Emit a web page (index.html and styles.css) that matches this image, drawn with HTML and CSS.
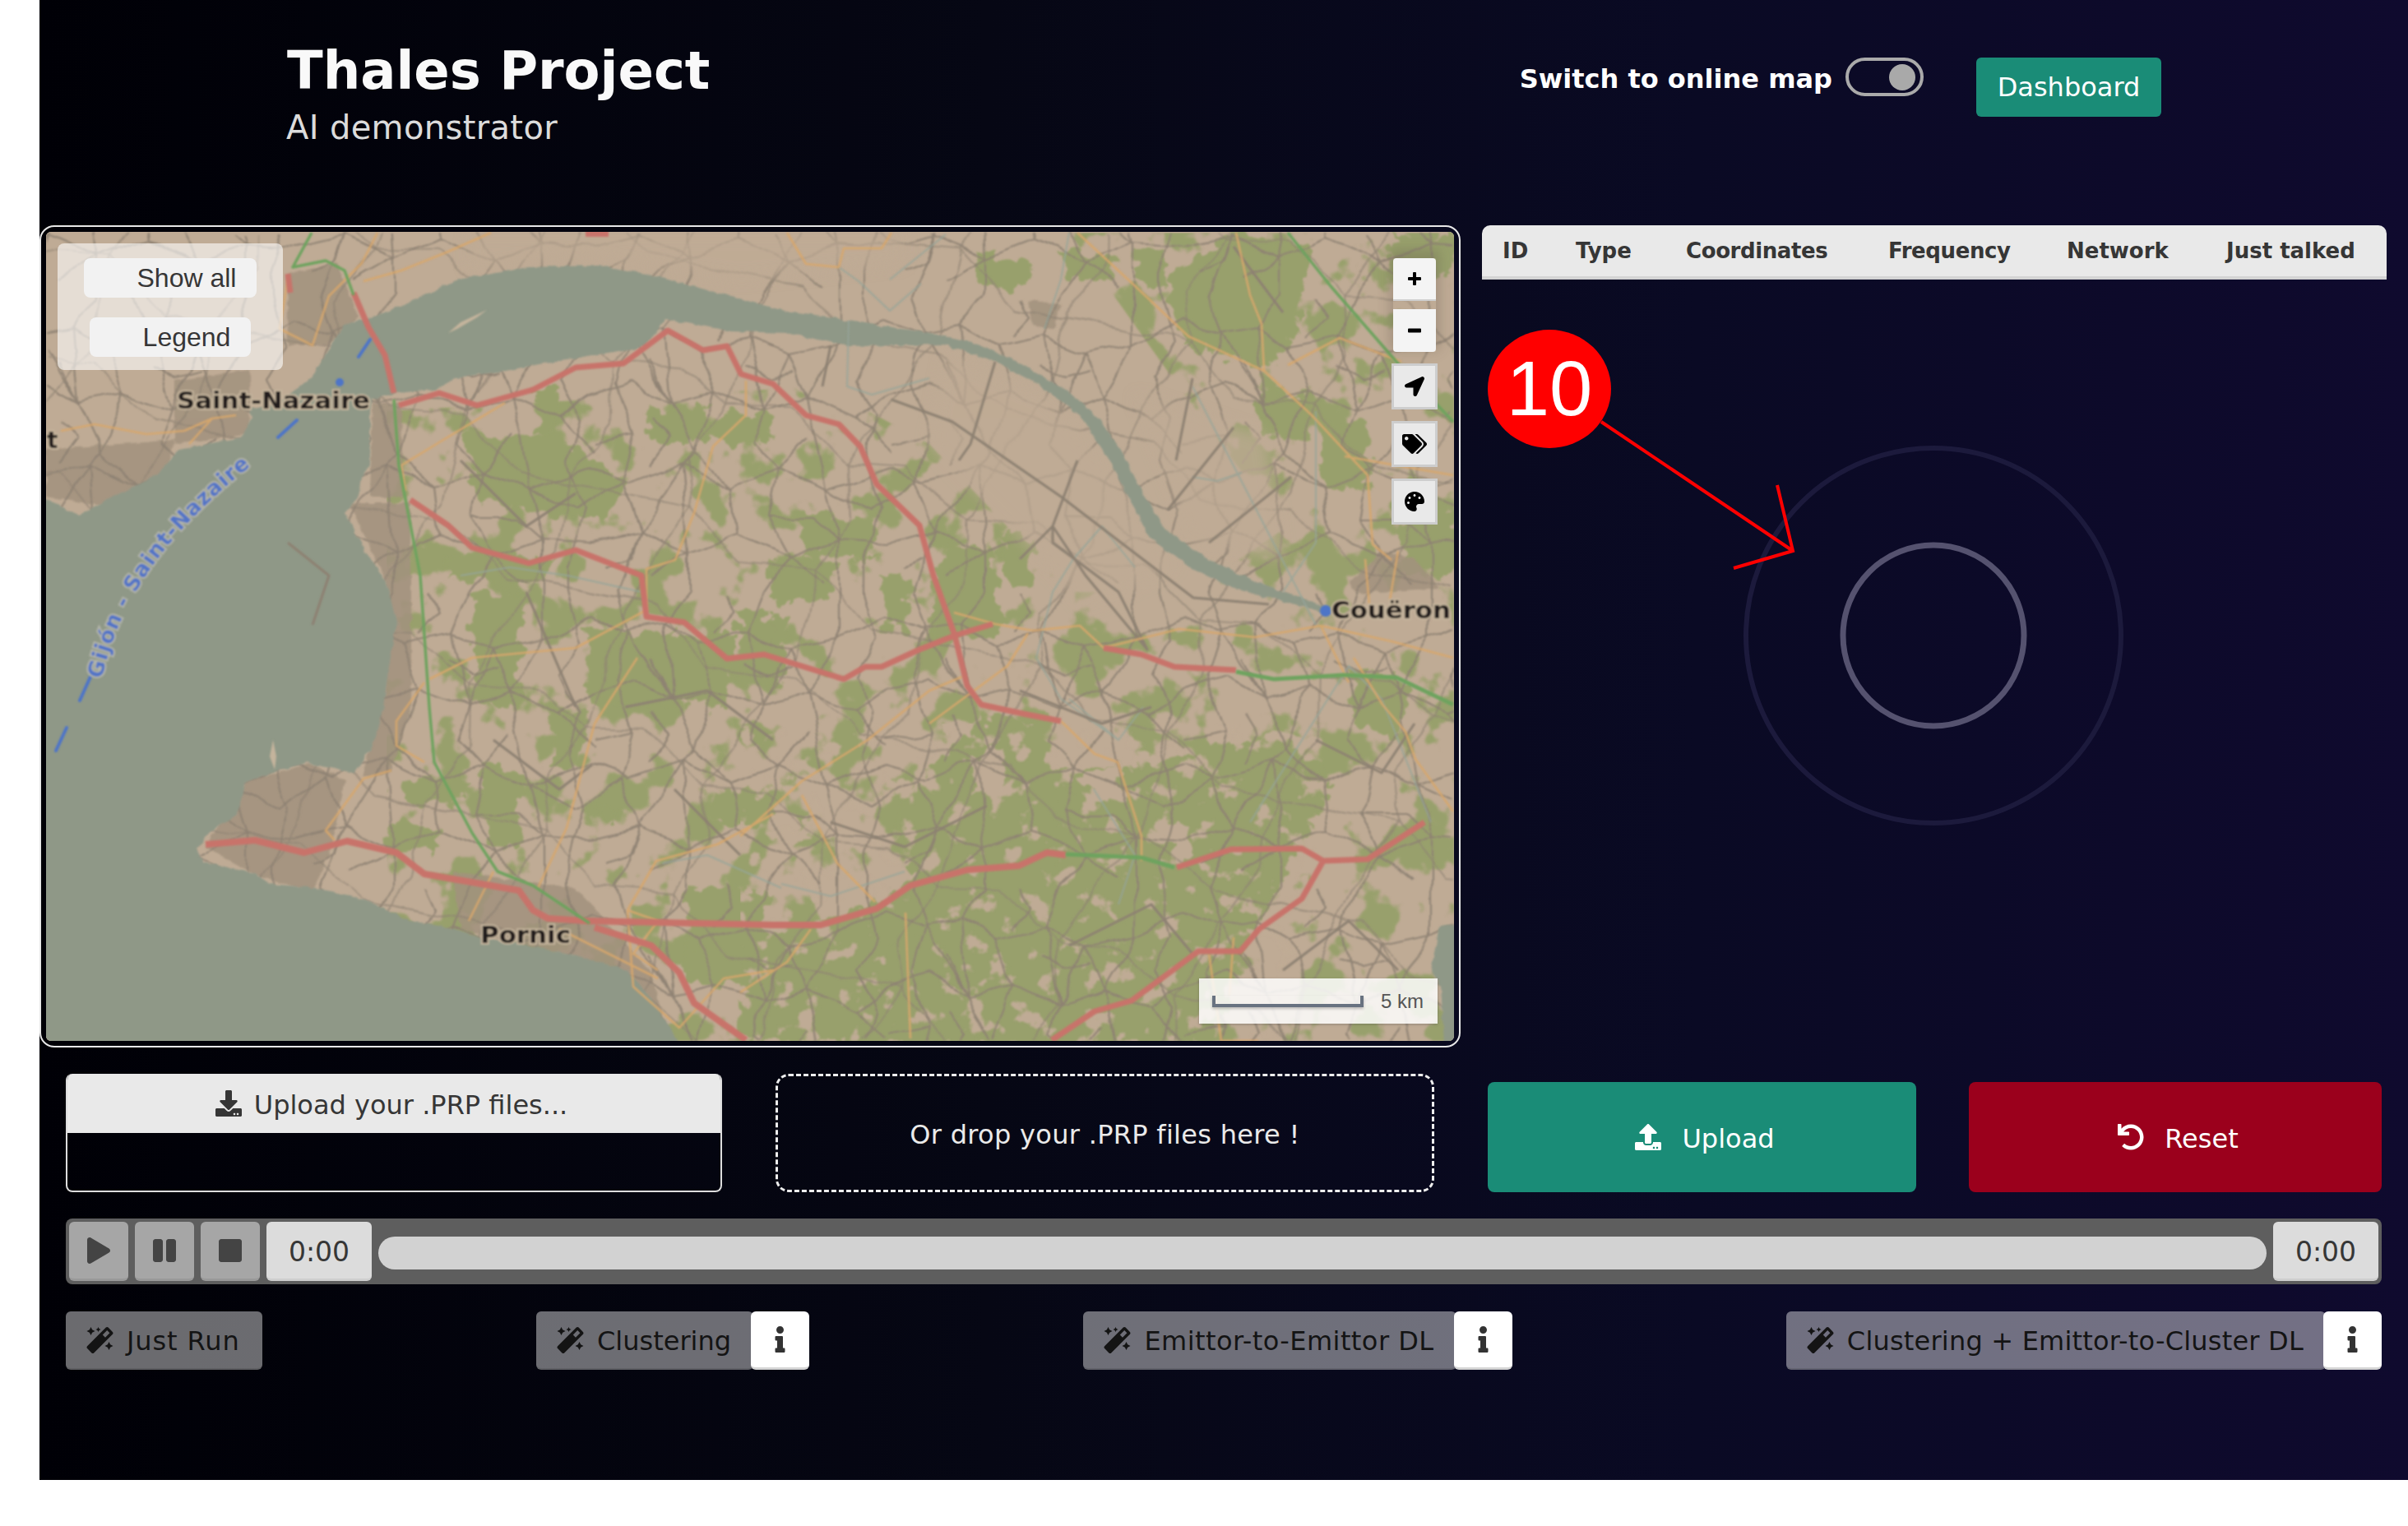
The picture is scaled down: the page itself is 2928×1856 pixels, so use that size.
FILE: index.html
```html
<!DOCTYPE html>
<html lang="en">
<head>
<meta charset="utf-8">
<title>Thales Project</title>
<link rel="stylesheet" href="styles.css">
</head>
<body>
<svg class="defs" width="0" height="0" aria-hidden="true">
  <defs>
    <symbol id="i-wand" viewBox="0 0 512 512"><path d="M224 96l16-32 32-16-32-16-16-32-16 32-32 16 32 16 16 32zM80 160l26.660-53.330L160 80l-53.340-26.670L80 0 53.330 53.330 0 80l53.330 26.670L80 160zm352 128l-26.660 53.330L352 368l53.340 26.670L432 448l26.660-53.330L512 368l-53.340-26.670L432 288zm70.620-193.770L417.770 9.380C411.530 3.120 403.340 0 395.150 0c-8.190 0-16.380 3.120-22.630 9.380L9.380 372.520c-12.500 12.500-12.500 32.760 0 45.250l84.850 84.850c6.250 6.250 14.440 9.370 22.620 9.370 8.190 0 16.380-3.120 22.630-9.370l363.140-363.150c12.500-12.480 12.500-32.750 0-45.240zM359.450 203.460l-50.910-50.910 86.600-86.600 50.910 50.910-86.600 86.600z"/></symbol>
    <symbol id="i-info" viewBox="0 0 192 512"><path d="M20 424.229h20V279.771H20c-11.046 0-20-8.954-20-20V212c0-11.046 8.954-20 20-20h112c11.046 0 20 8.954 20 20v212.229h20c11.046 0 20 8.954 20 20V492c0 11.046-8.954 20-20 20H20c-11.046 0-20-8.954-20-20v-47.771c0-11.046 8.954-20 20-20zM96 0C56.235 0 24 32.235 24 72s32.235 72 72 72 72-32.235 72-72S135.764 0 96 0z"/></symbol>
    <pattern id="roads-a" width="360" height="360" patternUnits="userSpaceOnUse">
      <g class="tile">
        <path d="M0 30L40 46 88 38 130 62 190 50 240 70 300 58 360 30"/>
        <path d="M0 120L50 104 96 130 150 118 210 140 262 122 320 148 360 120"/>
        <path d="M0 210L44 226 110 204 168 232 226 212 284 236 360 210"/>
        <path d="M0 300L60 286 118 312 176 290 240 318 300 296 360 300"/>
        <path d="M30 0L44 46 28 104 52 170 36 226 58 286 30 360"/>
        <path d="M118 0L88 38 96 130 124 190 110 204 118 312 118 360"/>
        <path d="M210 0L190 50 210 140 196 180 226 212 214 270 240 318 210 360"/>
        <path d="M300 0L300 58 262 122 284 236 300 296 300 360"/>
        <path d="M44 46L96 130M150 118L124 190 168 232M240 70L210 140M320 148L360 190M52 170L0 180M176 290L168 232M58 286L110 204M262 122L240 70M284 236L340 262 360 250M96 130L70 80M226 212L262 170M130 62L150 118M36 226L0 250M214 270L270 270 300 296M118 312L70 340M240 318L280 350"/>
        <path d="M330 0L346 60 322 100 344 148 330 200 350 262 330 330 330 360M160 0L172 26 150 50M76 150L92 176 70 206M186 84L216 100 246 92M20 330L48 318 58 286"/>
      </g>
    </pattern>
    <pattern id="roads-b" width="470" height="430" patternUnits="userSpaceOnUse" patternTransform="rotate(24)">
      <g class="tile tile-thin">
        <path d="M0 70L70 90 140 60 230 96 300 70 390 100 470 70"/>
        <path d="M0 240L80 220 160 262 250 230 340 270 470 240"/>
        <path d="M60 0L70 90 50 170 80 220 60 320 60 430"/>
        <path d="M250 0L230 96 262 160 250 230 270 340 250 430"/>
        <path d="M400 0L390 100 420 170 400 250 420 340 400 430"/>
        <path d="M0 370L90 350 170 390 280 360 380 390 470 370"/>
      </g>
    </pattern>
    <filter id="patches" x="0" y="0" width="100%" height="100%" color-interpolation-filters="sRGB">
      <feTurbulence type="fractalNoise" baseFrequency="0.017" numOctaves="4" seed="21" result="n"/>
      <feColorMatrix in="n" type="matrix" values="0 0 0 0 .596  0 0 0 0 .627  0 0 0 0 .424  1 0 0 0 0"/>
      <feComponentTransfer><feFuncA type="linear" slope="16" intercept="-8.7"/></feComponentTransfer>
      <feComposite in2="SourceGraphic" operator="in"/>
      <feGaussianBlur stdDeviation="0.9"/>
    </filter>
    <filter id="holes" x="0" y="0" width="100%" height="100%" color-interpolation-filters="sRGB">
      <feTurbulence type="fractalNoise" baseFrequency="0.035" numOctaves="4" seed="5" result="n"/>
      <feColorMatrix in="n" type="matrix" values="0 0 0 0 .749  0 0 0 0 .671  0 0 0 0 .584  1 0 0 0 0"/>
      <feComponentTransfer><feFuncA type="linear" slope="12" intercept="-7.2"/></feComponentTransfer>
      <feComposite in2="SourceGraphic" operator="in"/>
      <feGaussianBlur stdDeviation="1"/>
    </filter>
    <filter id="rough" x="-5%" y="-5%" width="110%" height="110%">
      <feTurbulence type="fractalNoise" baseFrequency="0.05" numOctaves="3" seed="7"/>
      <feDisplacementMap in="SourceGraphic" scale="34" xChannelSelector="R" yChannelSelector="G"/>
      <feGaussianBlur stdDeviation="0.9"/>
    </filter>
    <filter id="wobble" x="0" y="0" width="100%" height="100%">
      <feTurbulence type="fractalNoise" baseFrequency="0.02" numOctaves="2" seed="3"/>
      <feDisplacementMap in="SourceGraphic" scale="18" xChannelSelector="R" yChannelSelector="G"/>
      <feGaussianBlur stdDeviation="0.85"/>
    </filter>
    <filter id="coast" x="-2%" y="-2%" width="104%" height="104%">
      <feTurbulence type="fractalNoise" baseFrequency="0.09" numOctaves="2" seed="11"/>
      <feDisplacementMap in="SourceGraphic" scale="6" xChannelSelector="R" yChannelSelector="G"/>
      <feGaussianBlur stdDeviation="0.8"/>
    </filter>
    <filter id="soft"><feGaussianBlur stdDeviation="0.8"/></filter>
    <filter id="softer"><feGaussianBlur stdDeviation="9"/></filter>
  </defs>
</svg>

<div class="app">
  <header class="topbar">
    <div class="brand">
      <h1 class="brand-title">Thales Project</h1>
      <p class="brand-sub">AI demonstrator</p>
    </div>
    <div class="top-actions">
      <span class="switch-label">Switch to online map</span>
      <span class="toggle"><span class="toggle-knob"></span></span>
      <button class="btn-dashboard">Dashboard</button>
    </div>
  </header>

  <section class="workspace">
    <div class="map-card">
      <div class="map">
        <svg class="map-art" viewBox="56 282 1712 984" preserveAspectRatio="none" aria-hidden="true">
          <rect class="m-land" x="56" y="282" width="1712" height="984"/>
          <path class="m-forest-noise" filter="url(#patches)" d="M470 500L1000 470 1130 540 1300 720 1450 720 1768 500 1768 1266 470 1266ZM1300 283L1768 283 1768 500 1560 640 1440 480Z"/>
          <g filter="url(#rough)" class="m-forest">
            <path d="M1124 943L1198 877 1267 873 1273 933 1313 933 1399 933 1480 905 1589 913 1618 960 1589 1013 1577 1040 1531 1117 1508 1167 1474 1270 917 1270 911 1133 1015 1117 1112 1067 1089 987Z"/>
            <path d="M1187 310L1256 316 1250 350 1195 352ZM1290 306L1360 312 1352 340 1296 342ZM1417 340L1500 283 1590 300 1580 400 1540 450 1440 420ZM1526 474L1595 480 1590 535 1535 530ZM1606 509L1669 520 1660 597 1615 590Z"/>
            <path d="M1158 662L1204 668 1221 776 1130 770 1136 705ZM1219 650L1256 654 1252 711 1224 708ZM900 750L957 756 950 834 900 830ZM969 623L1066 628 1060 681 975 676ZM934 681L1015 686 1010 734 940 730Z"/>
            <path d="M568 524L680 530 763 590 740 627 620 620 575 600ZM650 470L680 474 676 530 654 526ZM539 673L671 680 665 708 545 706ZM786 497L940 505 932 539 790 536ZM574 719L637 724 632 860 580 855ZM712 765L890 772 884 860 718 855ZM895 742L940 748 935 796 900 790Z"/>
            <path d="M666 867L712 870 708 930 672 928ZM488 943L568 948 562 977 494 975ZM465 1000L534 1005 528 1033 470 1030ZM585 933L637 940 630 1033 590 1030ZM861 960L940 966 934 1007 868 1002ZM832 1077L935 1082 930 1200 838 1195ZM895 1217L940 1222 936 1263 900 1260ZM717 980L757 984 752 1000 722 998Z"/>
            <path d="M1690 285L1768 285 1768 330 1700 350ZM1700 640L1768 620 1768 700 1710 695ZM1640 810L1720 830 1700 900 1650 880ZM1380 300L1420 310 1412 350 1386 346ZM1070 700L1110 705 1100 770 1076 765Z"/>
          </g>
          <path class="m-forest-noise" filter="url(#holes)" d="M900 880L1500 880 1620 900 1560 1266 900 1266Z"/>
          <g filter="url(#rough)" class="m-land">
            <path d="M1313 940L1359 930 1365 970 1330 975ZM1180 920L1226 906 1220 960 1186 965ZM1420 1000L1450 1006 1440 1050 1422 1040Z"/>
          </g>
          <g class="m-urban" filter="url(#coast)">
            <path d="M350 333L410 320 436 386 400 420 350 420ZM212 463L304 450 304 528 212 540ZM56 547L212 535 200 590 130 616 56 604ZM453 490L488 490 490 604 450 604ZM425 612L499 612 499 700 470 708ZM470 700L500 700 500 860 475 940 440 945 462 860Z"/>
            <path d="M250 1030L300 950 378 928 420 950 400 1040 380 1085 310 1065ZM550 1060L700 1080 790 1180 815 1266 780 1266 700 1165 640 1150 560 1130Z"/>
            <path d="M1640 710L1680 670 1720 680 1750 715 1650 722ZM1250 365L1290 370 1280 400 1255 396Z"/>
          </g>
          <rect class="m-tile" x="56" y="282" width="1712" height="984" fill="url(#roads-a)" filter="url(#wobble)"/>
          <rect class="m-tile-b" x="56" y="282" width="1712" height="984" fill="url(#roads-b)" filter="url(#wobble)"/>
          <path class="m-fade" filter="url(#softer)" d="M570 283L1100 283 1100 320 900 340 700 310 570 330ZM1150 430L1270 480 1360 580 1430 690 1320 740 1230 640 1130 540ZM1380 480L1540 530 1560 680 1450 660Z"/>
          <path class="m-water" filter="url(#coast)" d="M379 459L419 394 453 386 499 367 557 340 643 325 729 323 786 333 872 356 957 379 1032 390 1130 405 1187 417 1244 444 1302 478 1336 509 1365 551 1388 597 1417 643 1463 677 1520 704 1612 738 1606 744 1497 715 1445 689 1399 654 1371 604 1348 558 1313 505 1267 470 1210 440 1147 419 1032 421 957 405 890 403 809 388 786 421 746 428 671 440 614 451 557 459 528 474 482 478 453 486 450 497 450 566 439 581 436 604 419 624 442 666 470 708 482 757 473 810 465 867 453 907 430 940 373 928 338 937 298 953 287 993 258 1010 238 1033 247 1048 310 1063 327 1075 384 1080 442 1093 499 1120 545 1128 585 1140 643 1150 700 1163 763 1180 786 1207 815 1250 826 1270 50 1270 50 604 97 627 138 604 189 578 218 547 293 532 307 509 304 497 338 490Z"/>
          <path class="m-water" filter="url(#coast)" d="M1750 1127L1770 1125 1770 1270 1756 1270 1752 1200 1740 1180Z"/>
          <path class="m-shoal" filter="url(#soft)" d="M545 405L560 392 592 377 580 386 556 400ZM334 936L328 920 332 900 336 920Z"/>
          <g class="m-river" filter="url(#soft)">
            <path d="M1032 390L1030 470 1060 480 1130 460M1120 345L1082 378 1044 342 1020 325M1150 285L1082 340M1270 400L1290 340 1300 283M1380 690L1340 640 1305 680 1280 720 1260 800 1290 850 1360 900M1450 580L1480 585 1510 575M1300 850L1360 900 1390 860M1600 500L1600 660 1560 720M1450 470L1600 760M1520 1000L1640 810 1680 850 1740 1000M1330 960L1380 1040 1360 1100"/>
            <path d="M560 700L620 690 690 700 780 720M805 1050L860 1040 950 1080M1100 1060L1010 1090 950 1075"/>
          </g>
          <g class="m-rail" filter="url(#soft)">
            <path d="M1084 486L1158 513 1290 604 1405 692 1451 727 1543 735"/>
            <path d="M1280 640L1320 700 1395 790 1360 720 1280 660ZM1010 420L1000 470M1210 440L1180 540 1166 560M1310 560L1280 640 1240 680M1430 560L1450 460M1420 620L1500 520M1470 660L1570 580"/>
            <path d="M350 660L400 700 380 760M560 560L640 640 700 600M640 720L700 860M760 860L860 840 940 900M600 900L680 960 720 930M820 960L900 1040M1010 1000L1100 1030 1200 980M1300 1150L1400 1100 1450 1160M1560 1180L1640 1120 1700 1180M1600 900L1680 940 1720 880M1500 300L1560 380M1240 840L1340 880 1400 860"/>
          </g>
          <g class="m-orange" filter="url(#soft)">
            <path d="M597 283L545 306 488 329 442 342M459 283L440 320 400 360 380 420 340 400 350 340"/>
            <path d="M74 524L115 516 178 528 224 524 258 509 287 505M258 509L230 540"/>
            <path d="M614 490L539 535 488 566 493 597"/>
            <path d="M907 463L907 505 867 543 844 624 821 681 786 692 786 742 700 788 574 800 522 826"/>
            <path d="M957 283L980 321 1020 325 1026 302 1072 302 1084 283"/>
            <path d="M1310 283L1376 344 1445 409 1537 451 1595 505 1663 578 1669 662 1692 681M1635 555L1767 578"/>
            <path d="M1503 283L1520 359 1534 394 1537 451M1566 444L1629 411 1704 440M1660 680L1665 735M1700 670L1690 730"/>
            <path d="M1210 759L1256 767 1313 761 1342 788 1434 765 1526 775 1606 761 1692 780 1767 800M1606 761L1640 830M1160 745L1210 759M1250 770L1225 810 1130 880"/>
            <path d="M1290 877L1331 917 1359 927 1388 1017 1388 1047"/>
            <path d="M1646 800L1681 857 1709 890 1721 923 1767 987"/>
            <path d="M775 800L723 880 689 1007 654 1080"/>
            <path d="M940 990L872 1027 798 1047 763 1107M763 1107L800 1120 770 1160 800 1180M763 1107L770 1200 826 1250 880 1190 940 1180"/>
            <path d="M975 950L1055 900 1130 840 1170 823M975 967L1018 1050 1064 1097M975 950L900 1017M1101 1110L1107 1263M986 1130L957 1170 900 1207"/>
            <path d="M516 830L482 877 482 907 516 927M476 937L442 947 396 1010 407 1022M600 1060L570 1120M680 1130L800 1190"/>
            <path d="M1470 1160L1485 1266 1530 1266M1495 1210L1500 1140"/>
          </g>
          <g class="m-red" filter="url(#soft)">
            <path d="M350 333L353 356M430 356L448 398 468 432 479 478"/>
            <path class="m-red-b" d="M712 284L740 284"/>
            <path d="M485 493L534 478 580 493 648 474 700 447 758 442 812 402 855 426 884 421 901 455 940 467 980 505 1020 516 1046 543 1066 589 1118 639 1135 700 1161 773 1176 834 1193 857 1244 868 1290 877"/>
            <path d="M1207 759L1161 773 1118 790 1072 811 1052 811 1026 826 929 796 884 801 832 757 786 750 780 700 700 669 643 685 574 666 545 639 499 608"/>
            <path d="M1342 788L1388 796 1428 811 1503 815"/>
            <path class="m-red-b" d="M250 1027L310 1022 370 1037 422 1023 482 1037 516 1063 631 1083 648 1107 666 1117 712 1120 940 1125 998 1125 1066 1105 1107 1077 1176 1058 1239 1053 1273 1037 1296 1040"/>
            <path d="M1431 1055L1497 1033 1583 1032 1609 1047 1663 1045 1732 1000M1609 1047L1583 1093 1531 1130 1508 1157 1457 1157 1376 1217 1331 1230 1279 1265"/>
            <path class="m-red-b" d="M723 1128L792 1150 826 1183 844 1220 907 1265"/>
          </g>
          <g class="m-green" filter="url(#soft)">
            <path d="M379 283L356 325 396 317 419 329 430 359M479 486L485 566 511 700 522 860 528 927 574 1013 605 1060 648 1077 717 1123"/>
            <path d="M1566 283L1618 348 1698 440 1767 513"/>
            <path class="m-green-b" d="M1503 817L1549 826 1635 821 1698 824 1767 857M1296 1039L1388 1043 1428 1055"/>
          </g>
          <g class="m-ferry" filter="url(#soft)">
            <path d="M68 913L81 885M97 852L110 823M338 532L361 511M436 434L450 413"/>
            <circle cx="413" cy="465" r="3"/>
            <circle cx="1612" cy="743" r="5"/>
          </g>
          <path id="ferry-path" class="m-none" d="M124 826C144 730 205 636 346 536"/>
          <text class="m-ferry-label" filter="url(#soft)"><textPath href="#ferry-path">Gijón - Saint-Nazaire</textPath></text>
          <g class="m-labels" filter="url(#soft)">
            <text x="215" y="497" textLength="235" lengthAdjust="spacingAndGlyphs">Saint-Nazaire</text>
            <text x="1619" y="752" textLength="145" lengthAdjust="spacingAndGlyphs">Couëron</text>
            <text x="584" y="1147" textLength="110" lengthAdjust="spacingAndGlyphs">Pornic</text>
            <text x="57" y="545">t</text>
          </g>
        </svg>

        <div class="layer-panel">
          <button class="layer-btn">Show all</button>
          <button class="layer-btn">Legend</button>
        </div>

        <div class="map-tools">
          <div class="zoom-group">
            <button class="zoom-btn"><svg class="zoom-icon" viewBox="0 0 16 16"><path d="M6 1a1 1 0 0 1 1-1h2a1 1 0 0 1 1 1v5h5a1 1 0 0 1 1 1v2a1 1 0 0 1-1 1h-5v5a1 1 0 0 1-1 1h-2a1 1 0 0 1-1-1v-5h-5a1 1 0 0 1-1-1v-2a1 1 0 0 1 1-1h5z"/></svg></button>
            <button class="zoom-btn"><svg class="zoom-icon" viewBox="0 0 16 16"><rect y="5.500" width="16" height="5" rx="1"/></svg></button>
          </div>
          <button class="tool-btn"><svg class="tool-icon" viewBox="0 0 512 512"><path d="M444.520 3.520L28.740 195.420c-47.970 22.390-31.980 92.750 19.190 92.750h175.910v175.910c0 51.170 70.360 67.170 92.750 19.190l191.900-415.780c15.990-38.390-25.590-79.970-63.970-63.970z"/></svg></button>
          <button class="tool-btn"><svg class="tool-icon tool-icon-wide" viewBox="0 0 640 512"><path d="M497.941 225.941L286.059 14.059A48 48 0 0 0 252.118 0H48C21.490 0 0 21.490 0 48v204.118a48 48 0 0 0 14.059 33.941l211.882 211.882c18.744 18.745 49.136 18.746 67.882 0l204.118-204.118c18.745-18.745 18.745-49.137 0-67.882zM112 160c-26.510 0-48-21.490-48-48s21.490-48 48-48 48 21.490 48 48-21.490 48-48 48zm513.941 133.823L421.823 497.941c-18.745 18.745-49.137 18.745-67.882 0l-.36-.36L527.640 323.522c16.999-16.999 26.360-39.600 26.360-63.640s-9.362-46.641-26.360-63.640L331.397 0h48.721a48 48 0 0 1 33.941 14.059l211.882 211.882c18.745 18.745 18.745 49.137 0 67.882z"/></svg></button>
          <button class="tool-btn"><svg class="tool-icon" viewBox="0 0 512 512"><path d="M204.300 5C104.900 24.400 24.800 104.300 5.200 203.400c-37 187 131.700 326.400 258.800 306.700 41.200-6.400 61.400-54.600 42.500-91.700-23.100-45.400 9.900-98.400 60.900-98.400h79.700c35.800 0 64.800-29.600 64.900-65.300C511.500 97.100 368.100-26.900 204.300 5zM96 320c-17.700 0-32-14.300-32-32s14.300-32 32-32 32 14.300 32 32-14.300 32-32 32zm32-128c-17.700 0-32-14.300-32-32s14.300-32 32-32 32 14.300 32 32-14.300 32-32 32zm128-64c-17.700 0-32-14.300-32-32s14.300-32 32-32 32 14.300 32 32-14.300 32-32 32zm128 64c-17.700 0-32-14.300-32-32s14.300-32 32-32 32 14.300 32 32-14.300 32-32 32z"/></svg></button>
        </div>

        <div class="scale-box">
          <span class="scale-bar"></span>
          <span class="scale-text">5 km</span>
        </div>
      </div>
    </div>

    <div class="side">
      <div class="emitter-head">
        <span>ID</span><span>Type</span><span class="head-tight">Coordinates</span><span class="head-tight">Frequency</span><span>Network</span><span>Just talked</span>
      </div>
      <svg class="radar" viewBox="0 0 470 470" aria-hidden="true">
        <circle class="radar-outer" cx="235" cy="235" r="228"/>
        <circle class="radar-inner" cx="235" cy="235" r="110"/>
      </svg>
    </div>
  </section>

  <section class="upload-row">
    <div class="file-box">
      <div class="file-cta">
        <svg class="icon-md" viewBox="0 0 512 512"><path d="M216 0h80c13.300 0 24 10.700 24 24v168h87.700c17.800 0 26.700 21.500 14.100 34.100L269.700 378.300c-7.500 7.500-19.800 7.500-27.300 0L90.100 226.100c-12.600-12.600-3.700-34.100 14.100-34.100H192V24c0-13.300 10.700-24 24-24zm296 376v112c0 13.300-10.700 24-24 24H24c-13.300 0-24-10.700-24-24V376c0-13.300 10.700-24 24-24h146.700l49 49c20.100 20.100 52.500 20.100 72.600 0l49-49H488c13.300 0 24 10.700 24 24zm-124 88c0-11-9-20-20-20s-20 9-20 20 9 20 20 20 20-9 20-20zm64 0c0-11-9-20-20-20s-20 9-20 20 9 20 20 20 20-9 20-20z"/></svg>
        <span class="lbl">Upload your .PRP files...</span>
      </div>
    </div>
    <div class="drop-box">Or drop your .PRP files here !</div>
    <button class="action action-upload">
      <svg class="icon-md" viewBox="0 0 512 512"><path d="M296 384h-80c-13.300 0-24-10.700-24-24V192h-87.700c-17.800 0-26.700-21.500-14.100-34.100L242.300 5.700c7.500-7.500 19.800-7.500 27.300 0l152.200 152.200c12.600 12.600 3.700 34.100-14.100 34.100H320v168c0 13.300-10.700 24-24 24zm216-8v112c0 13.300-10.700 24-24 24H24c-13.300 0-24-10.700-24-24V376c0-13.300 10.700-24 24-24h136v8c0 30.900 25.100 56 56 56h80c30.900 0 56-25.100 56-56v-8h136c13.300 0 24 10.700 24 24zm-124 88c0-11-9-20-20-20s-20 9-20 20 9 20 20 20 20-9 20-20zm64 0c0-11-9-20-20-20s-20 9-20 20 9 20 20 20 20-9 20-20z"/></svg>
      <span class="lbl">Upload</span>
    </button>
    <button class="action action-reset">
      <svg class="icon-md" viewBox="0 0 512 512"><path d="M212.333 224.333H12c-6.627 0-12-5.373-12-12V12C0 5.373 5.373 0 12 0h48c6.627 0 12 5.373 12 12v78.112C117.773 39.279 184.260 7.470 258.175 8.007c136.906.994 246.448 111.623 246.157 248.532C504.041 393.258 393.120 504 256.333 504c-64.089 0-122.496-24.313-166.510-64.215-5.099-4.622-5.334-12.554-.467-17.420l33.967-33.967c4.474-4.474 11.662-4.717 16.401-.525C170.760 415.336 211.580 432 256.333 432c97.268 0 176-78.716 176-176 0-97.267-78.716-176-176-176-58.496 0-110.280 28.476-142.274 72.333h98.274c6.627 0 12 5.373 12 12v48c0 6.627-5.373 12-12 12z"/></svg>
      <span class="lbl">Reset</span>
    </button>
  </section>

  <section class="player">
    <button class="p-btn"><svg class="p-icon" viewBox="0 0 448 512"><path d="M424.400 214.700L72.400 6.600C43.800-10.300 0 6.100 0 47.900V464c0 37.500 40.700 60.100 72.400 41.300l352-208c31.400-18.500 31.500-64.100 0-82.600z"/></svg></button>
    <button class="p-btn"><svg class="p-icon" viewBox="0 0 448 512"><path d="M144 479H48c-26.500 0-48-21.500-48-48V79c0-26.500 21.500-48 48-48h96c26.500 0 48 21.500 48 48v352c0 26.500-21.500 48-48 48zm304-48V79c0-26.500-21.500-48-48-48h-96c-26.500 0-48 21.500-48 48v352c0 26.500 21.500 48 48 48h96c26.500 0 48-21.500 48-48z"/></svg></button>
    <button class="p-btn"><svg class="p-icon" viewBox="0 0 448 512"><path d="M400 32H48C21.500 32 0 53.500 0 80v352c0 26.500 21.500 48 48 48h352c26.500 0 48-21.500 48-48V80c0-26.500-21.500-48-48-48z"/></svg></button>
    <span class="p-time">0:00</span>
    <span class="p-track"></span>
    <span class="p-time">0:00</span>
  </section>

  <section class="modes">
    <div class="mode">
      <button class="mode-btn"><svg class="icon-wand"><use href="#i-wand"/></svg><span class="lbl track-run">Just Run</span></button>
    </div>
    <div class="mode">
      <button class="mode-btn"><svg class="icon-wand"><use href="#i-wand"/></svg><span class="lbl">Clustering</span></button>
      <button class="mode-info"><svg class="icon-info"><use href="#i-info"/></svg></button>
    </div>
    <div class="mode">
      <button class="mode-btn"><svg class="icon-wand"><use href="#i-wand"/></svg><span class="lbl track-e2e">Emittor-to-Emittor DL</span></button>
      <button class="mode-info"><svg class="icon-info"><use href="#i-info"/></svg></button>
    </div>
    <div class="mode">
      <button class="mode-btn"><svg class="icon-wand"><use href="#i-wand"/></svg><span class="lbl track-e2c">Clustering + Emittor-to-Cluster DL</span></button>
      <button class="mode-info"><svg class="icon-info"><use href="#i-info"/></svg></button>
    </div>
  </section>

  <div class="callout-badge">10</div>
  <svg class="callout-arrow" viewBox="0 0 300 310" aria-hidden="true">
    <path d="M12 122L245 279M226 199L245 279 173 300"/>
  </svg>
</div>
</body>
</html>
```
FILE: styles.css
```css
* { box-sizing: border-box; }
html, body { margin: 0; padding: 0; background: #fff; }
body { font-family: "DejaVu Sans", sans-serif; overflow: hidden; }
button { font-family: inherit; margin: 0; cursor: pointer; }
.defs { position: absolute; }
.lbl { padding-top: 3px; }
.track-run { letter-spacing: .9px; }
.track-e2e { letter-spacing: .45px; }
.track-e2c { letter-spacing: .2px; }

.app {
  position: relative;
  margin-left: 48px;
  width: 2880px;
  height: 1800px;
  background: linear-gradient(90deg, #000006 0%, #060714 40%, #0a0a24 70%, #0f0a2e 100%);
}

/* header */
.topbar { display: flex; height: 274px; padding: 0 300px 0 301px; }
.brand { padding-top: 50px; }
.brand-title { margin: 0; font-size: 64px; line-height: 72px; font-weight: 700; color: #f9f9f9; }
.brand-sub { margin: 9px 0 0 -1px; font-size: 40px; line-height: 48px; letter-spacing: .35px; color: #dcdcdc; }
.top-actions { margin-left: auto; display: flex; align-items: flex-start; padding-top: 70px; }
.switch-label { padding-top: 1px; font-size: 32px; line-height: 50px; font-weight: 700; color: #fff; margin-right: 16px; }
.toggle {
  display: flex; align-items: center; justify-content: flex-end;
  width: 95px; height: 47px; padding-right: 6px;
  border: 4px solid #aaa; border-radius: 24px;
}
.toggle-knob { width: 32px; height: 32px; border-radius: 50%; background: #a9a9a9; }
.btn-dashboard {
  margin-left: 64px; width: 225px; height: 72px;
  border: 0; border-radius: 6px; background: #1a8c77;
  color: #fff; font-size: 32px;
}

/* workspace */
.workspace { display: flex; gap: 26px; height: 1000px; }
.map-card {
  width: 1728px; height: 1000px; padding: 6px;
  border: 2px solid #e8e8e8; border-radius: 18px;
}
.map { position: relative; height: 100%; overflow: hidden; border-radius: 6px; background: #bfab95; }
.map-art { display: block; width: 100%; height: 100%; }

.tile { fill: none; stroke: #8d8172; stroke-width: 2.2; stroke-linejoin: round; opacity: .95; }
.tile-thin { stroke-width: 1.8; opacity: .8; }
.m-land { fill: #bfab95; }
.m-forest { fill: #98a06c; }
.m-forest-noise { fill: #000; }
.m-urban { fill: #a2927e; opacity: .85; }
.m-water { fill: #8f9887; }
.m-shoal { fill: #c4b49c; }
.m-fade { fill: #bfab95; opacity: .72; }
.m-river { fill: none; stroke: #95a59a; stroke-width: 2; stroke-linejoin: round; opacity: .8; }
.m-rail { fill: none; stroke: #8d8172; stroke-width: 3; stroke-linejoin: round; }
.m-orange { fill: none; stroke: #d8a76c; stroke-width: 2.6; stroke-linejoin: round; opacity: .9; }
.m-red { fill: none; stroke: #c8736a; stroke-width: 7; stroke-linejoin: round; }
.m-red-b { stroke-width: 8; }
.m-green { fill: none; stroke: #6ea35f; stroke-width: 3.500; stroke-linejoin: round; }
.m-green-b { stroke-width: 5; }
.m-ferry { fill: #4d74c8; stroke: #4d74c8; stroke-width: 4; stroke-linecap: round; }
.m-none { fill: none; stroke: none; }
.m-ferry-label {
  font: 700 26px "DejaVu Sans", sans-serif; letter-spacing: 1px; fill: #5275c6;
  stroke: #b4b5aa; stroke-width: 4px; paint-order: stroke;
}
.m-labels text {
  font: 700 28px "DejaVu Sans", sans-serif; fill: #231f1a;
  stroke: #c4b49c; stroke-width: 4px; paint-order: stroke;
}

.layer-panel {
  position: absolute; left: 14px; top: 14px;
  display: flex; flex-direction: column; align-items: center; gap: 24px;
  width: 274px; height: 154px; padding-top: 18px;
  border-radius: 8px; background: rgba(255, 255, 255, .6);
}
.layer-btn {
  height: 48px; padding: 0 25px 0 65px;
  border: 0; border-radius: 8px; background: #f2f2f2;
  font-family: "Liberation Sans", sans-serif; font-size: 32px; color: #363636;
}

.map-tools { position: absolute; right: 20px; top: 32px; display: flex; flex-direction: column; align-items: center; gap: 14px; }
.zoom-group { display: flex; flex-direction: column; gap: 10px; box-shadow: 0 -6px 14px 4px rgba(90, 80, 70, .28); }
.zoom-btn {
  display: flex; align-items: center; justify-content: center;
  width: 52px; height: 52px; padding: 0;
  border: 0; border-bottom: 2px solid #cfcfcf; border-radius: 4px 4px 0 0; background: #f4f4f4;
}
.zoom-btn + .zoom-btn { border-bottom: 0; border-radius: 0 0 4px 4px; }
.zoom-icon { width: 16px; height: 16px; fill: #000; }
.tool-btn {
  display: flex; align-items: center; justify-content: center;
  width: 56px; height: 56px; padding: 0;
  border: 3px solid #cdcdcd; background: #e9e9e9;
}
.tool-icon { width: 24px; height: 24px; fill: #000; }
.tool-icon-wide { width: 30px; }

.scale-box {
  position: absolute; right: 20px; bottom: 21px;
  display: flex; align-items: center; gap: 21px;
  width: 290px; height: 55px; padding-left: 16px;
  background: rgba(255, 255, 255, .84);
  box-shadow: 0 1px 3px rgba(60, 60, 60, .35);
}
.scale-bar {
  display: block; width: 184px; height: 14px;
  border: 4px solid #687280; border-top: 0;
  box-shadow: 0 2px 3px rgba(60, 60, 60, .3);
}
.scale-text { font-family: "Liberation Sans", sans-serif; font-size: 24px; color: #555; }

/* side */
.side { width: 1100px; }
.emitter-head {
  display: grid;
  grid-template-columns: 89px 134px 246px 217px 194px 1fr;
  align-items: center;
  height: 66px; padding-left: 25px;
  border-bottom: 4px solid #d4d4d4; border-radius: 10px 10px 0 0;
  background: #e9e9e9;
  font-size: 26px; font-weight: 700; color: #363636;
}
.head-tight { letter-spacing: -.4px; }
.radar { display: block; width: 470px; height: 470px; margin: 198px 0 0 314px; }
.radar-outer { fill: none; stroke: #1c1a3c; stroke-width: 6; }
.radar-inner { fill: none; stroke: #55526f; stroke-width: 7; }

/* upload */
.upload-row { display: flex; align-items: flex-end; height: 144px; margin-top: 32px; padding: 0 32px; }
.file-box {
  width: 798px; height: 144px;
  border: 2px solid #ddd; border-top: 0; border-radius: 8px;
  overflow: hidden;
}
.file-cta {
  display: flex; align-items: center; justify-content: center; gap: 15px;
  height: 72px; padding-right: 6px; background: #e9e9e9; color: #363636; font-size: 32px;
  fill: #363636;
}
.icon-md { width: 32px; height: 32px; }
.drop-box {
  display: flex; align-items: center; justify-content: center;
  width: 801px; height: 144px; margin-left: 65px; padding-top: 3px;
  border: 3px dashed #eee; border-radius: 16px;
  color: #eaeaea; font-size: 32px; letter-spacing: .3px;
}
.action {
  display: flex; align-items: center; justify-content: center; gap: 25px;
  height: 134px; padding: 0 0 0 7px; border: 0; border-radius: 8px;
  color: #fff; fill: #fff; font-size: 32px;
}
.action-upload { width: 521px; margin-left: 65px; background: #1a8c77; }
.action-reset { width: 502px; margin-left: 64px; background: #9b001c; }

/* player */
.player {
  display: flex; align-items: center; gap: 8px;
  height: 80px; margin: 32px 32px 0; padding: 0 4px;
  border-radius: 8px; background: #5e5e5e;
}
.p-btn {
  display: flex; align-items: center; justify-content: center;
  width: 72px; height: 72px; padding: 0;
  border: 0; border-bottom: 3px solid #999; border-radius: 6px; background: #a6a6a6;
}
.p-icon { width: 28px; height: 32px; fill: #444; }
.p-time {
  display: flex; align-items: center; justify-content: center;
  width: 128px; height: 72px; padding-top: 4px;
  border-bottom: 3px solid #cecece; border-radius: 6px; background: #dcdcdc;
  color: #363636; font-size: 33px;
}
.p-track { flex: 1; height: 40px; margin-top: 4px; border-radius: 20px; background: #d2d2d2; }

/* modes */
.modes { display: flex; justify-content: space-between; margin: 33px 32px 0; }
.mode { display: flex; height: 71px; }
.mode-btn {
  display: flex; align-items: center; gap: 16px;
  height: 71px; padding: 0 27px 0 25px;
  border: 0; border-bottom: 2px solid rgba(0, 0, 0, .12); border-radius: 6px;
  background: rgba(255, 255, 255, .42);
  color: #141414; fill: #141414; font-size: 32px;
}
.mode-info {
  display: flex; align-items: center; justify-content: center;
  width: 71px; height: 71px; margin-left: -3px; padding: 0;
  border: 0; border-bottom: 3px solid #d4d4d4; border-radius: 6px; background: #fff;
}
.icon-wand { width: 33px; height: 32px; }
.icon-info { width: 13px; height: 32px; fill: #333; }

/* annotation */
.callout-badge {
  position: absolute; left: 1761px; top: 401px;
  display: flex; align-items: center; justify-content: center;
  width: 150px; height: 144px; border-radius: 50%;
  background: #ff0000; color: #fff;
  font-family: "Liberation Sans", sans-serif; font-size: 94px; line-height: 1;
}
.callout-arrow { position: absolute; left: 1887px; top: 391px; width: 300px; height: 310px; }
.callout-arrow path { fill: none; stroke: #ff0000; stroke-width: 4; }
```
